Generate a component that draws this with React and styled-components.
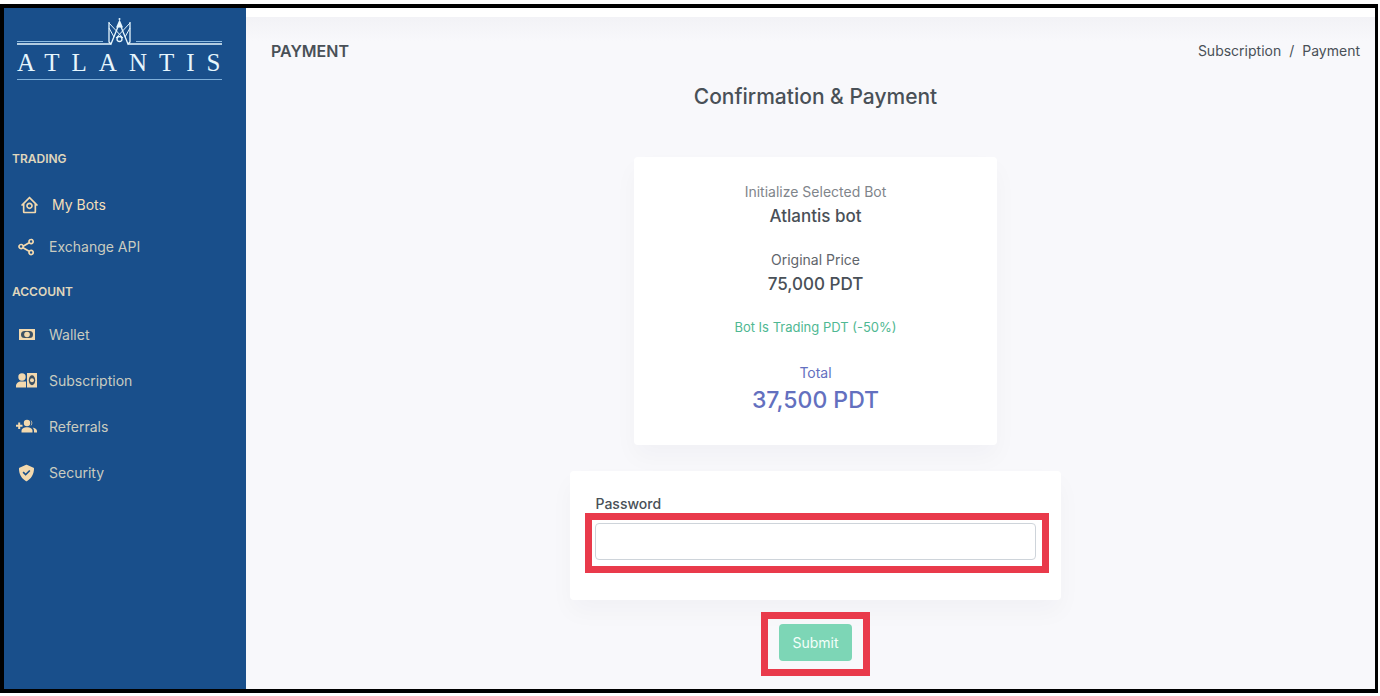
import React from "react";
import styled, { createGlobalStyle } from "styled-components";
import { BiHomeCircle, BiShareAlt, BiSolidCheckShield } from "react-icons/bi";

const GlobalStyle = createGlobalStyle`
  * {
    box-sizing: border-box;
  }

  body {
    margin: 0;
    background: #fff;
    color: #495057;
    font-family: Inter, "Open Sans", sans-serif;
    font-size: 14px;
    line-height: 20px;
  }
`;

const Page = styled.div`
  min-height: 100vh;
  padding: 4px 2px 3px 0;
  display: flex;
`;

const Frame = styled.div`
  flex: 1;
  display: flex;
  border: 4px solid #000;
  border-right-width: 3px;
  background: #f8f8fb;
`;

const Sidebar = styled.aside`
  flex: 0 0 242px;
  min-width: 0;
  background: #194f8b;
`;

const Logo = styled.a`
  display: block;
  margin: 10px 24px 0 13px;
  color: #e6f6fd;
  text-decoration: none;
  border-bottom: 1px solid #7fb0da;
`;

const LogoMark = styled.svg`
  display: block;
  width: 100%;
  height: 28px;
`;

const LogoText = styled.span`
  display: block;
  height: 33px;
  font-family: "Liberation Serif", serif;
  font-size: 25px;
  line-height: 33px;
  letter-spacing: 12px;
  white-space: nowrap;
`;

const Nav = styled.nav`
  margin-top: 69px;
`;

const NavTitle = styled.h2`
  margin: 0;
  padding-left: 8px;
  color: #e0d8bd;
  font-size: 12px;
  font-weight: 600;
  line-height: 20px;
`;

const NavList = styled.ul`
  margin: 0;
  padding: ${({ $compact }) => ($compact ? "15px 0 14px" : "10px 0 0")};
  list-style: none;
`;

const NavLink = styled.a`
  display: flex;
  align-items: center;
  gap: 11px;
  height: ${({ $compact }) => ($compact ? "42px" : "46px")};
  padding-left: ${({ $active }) => ($active ? "14px" : "11px")};
  color: ${({ $active }) => ($active ? "#f5dfb8" : "#c9ccc0")};
  text-decoration: none;

  svg {
    flex: none;
    width: 23px;
    height: 20px;
    color: #f3d9ae;
  }
`;

const Main = styled.main`
  flex: 1;
  padding: 0 15px 0 25px;
  border-top: 9px solid #fff;
  background: linear-gradient(#f2f2f6, #f8f8fb 24px);
`;

const Header = styled.header`
  display: flex;
  align-items: center;
  justify-content: space-between;
  padding-top: 24px;
`;

const PageTitle = styled.h1`
  margin: 0;
  font-size: 16px;
  font-weight: 600;
  line-height: 20px;
`;

const Breadcrumb = styled.ol`
  display: flex;
  gap: 8px;
  margin: 0;
  padding: 0;
  list-style: none;

  a {
    color: inherit;
    text-decoration: none;
  }
`;

const Heading = styled.h2`
  margin: 22px 0 0;
  font-size: 21px;
  font-weight: 500;
  line-height: 28px;
  text-align: center;
`;

const Card = styled.section`
  margin: 0 auto;
  border-radius: 4px;
  background: #fff;
  box-shadow: 0 12px 24px rgba(18, 38, 63, 0.03);
`;

const Summary = styled(Card)`
  width: calc(100% / 3);
  margin-top: 46px;
  padding: 24px 20px 28px;
  text-align: center;
`;

const Item = styled.div`
  margin-bottom: 19px;
  color: ${({ $color }) => $color};
`;

const Label = styled.p`
  margin: 0;
  line-height: 21px;
`;

const Value = styled.p`
  margin: 0;
  color: #495057;
  font-size: 17px;
  font-weight: 500;
  line-height: 28px;
`;

const Discount = styled.p`
  margin: 0 0 24px;
  color: #4fb892;
  font-size: 13px;
  line-height: 21px;
`;

const Total = styled.div`
  color: #6370bf;
`;

const TotalValue = styled.p`
  margin: 0;
  font-size: 23px;
  font-weight: 500;
  line-height: 34px;
`;

const PasswordCard = styled(Card)`
  width: 45%;
  margin-top: 26px;
  padding: 23px 25px 40px;
`;

const FieldLabel = styled.label`
  display: block;
  margin-bottom: 9px;
  font-weight: 500;
`;

const Highlight = styled.div`
  position: relative;

  &::after {
    content: "";
    position: absolute;
    inset: ${({ $inset }) => $inset};
    border: 7px solid #e93a4b;
    pointer-events: none;
  }
`;

const Input = styled.input`
  display: block;
  width: 100%;
  height: 37px;
  padding: 8px 12px;
  border: 1px solid #ced4da;
  border-radius: 4px;
  background: #fff;
  font: inherit;
`;

const Actions = styled.div`
  display: flex;
  justify-content: center;
  padding: 24px 0 28px;
`;

const Button = styled.button`
  display: block;
  height: 37px;
  padding: 0 13px;
  border: 0;
  border-radius: 4px;
  background: #7dd6b6;
  color: #f3fffa;
  font: inherit;
`;

const CashIcon = () => (
  <svg viewBox="0 0 23 20" fill="none" aria-hidden="true">
    <path fill="currentColor" d="M4 4h16v11H4z" />
    <rect x="6" y="6" width="12" height="7" rx="3.5" fill="#3d5163" />
    <circle cx="12" cy="9.5" r="2.8" fill="currentColor" />
  </svg>
);

const SubscriptionIcon = () => (
  <svg viewBox="0 0 23 20" fill="none" aria-hidden="true">
    <circle cx="7" cy="6" r="3.7" fill="currentColor" />
    <path fill="currentColor" d="M1 16.500v-1.500C1 12.300 3.300 10.500 6 10.500h5v6zM12 2h10v14.500H12z" />
    <ellipse cx="17" cy="9.200" rx="3.200" ry="5" fill="#3d5163" />
    <circle cx="17" cy="9.200" r="2" fill="currentColor" />
  </svg>
);

const ReferralsIcon = () => (
  <svg viewBox="0 0 23 20" fill="currentColor" aria-hidden="true">
    <path d="M3.200 5.500h2v2.300h2.300v2H5.200v2.300h-2V9.800H1v-2h2.200z" />
    <circle cx="12" cy="6" r="3.200" />
    <path d="M15.500 3.100a3.200 3.200 0 0 1 0 5.800 4.800 4.800 0 0 0 0-5.800z" />
    <path d="M6.500 15.500v-1.500c0-2.400 2.500-3.700 5.500-3.700s5.500 1.300 5.500 3.700v1.500z" />
    <path d="M17.500 10.600c2.500.4 4.500 1.600 4.500 3.400v1.500h-3V14c0-1.400-.5-2.500-1.500-3.400z" />
  </svg>
);

const trading = [
  { label: "My Bots", Icon: BiHomeCircle, active: true },
  { label: "Exchange API", Icon: BiShareAlt },
];

const account = [
  { label: "Wallet", Icon: CashIcon },
  { label: "Subscription", Icon: SubscriptionIcon },
  { label: "Referrals", Icon: ReferralsIcon },
  { label: "Security", Icon: BiSolidCheckShield },
];

const Menu = ({ items, compact }) => (
  <NavList $compact={compact}>
    {items.map(({ label, Icon, active }) => (
      <li key={label}>
        <NavLink href="#" $active={active} $compact={compact}>
          <Icon />
          {label}
        </NavLink>
      </li>
    ))}
  </NavList>
);

export default () => {
  return (
    <Page>
      <GlobalStyle />
      <Frame>
        <Sidebar>
          <Logo href="#">
            <LogoMark viewBox="0 0 205 28" fill="none" stroke="currentColor" aria-hidden="true">
              <path stroke="#8dbce2" d="M0 23.500h86M119 23.500h86" />
              <path strokeWidth="1.600" d="M0 26h94M205 26h-94" />
              <path strokeWidth="1.300" d="M92 4v20l2 2 8.500-21 8.500 21 2-2V4" />
              <path d="M92 5l14 15M113 5L99 20" />
              <path d="M92 10l5 9M113 10l-5 9" />
              <circle cx="102.500" cy="21" r="2.500" strokeWidth="1.300" />
              <path fill="currentColor" stroke="none" d="M102.500 1.500l3.500 8h-7z" />
              <circle cx="102.500" cy="1" r="1" fill="currentColor" stroke="none" />
            </LogoMark>
            <LogoText>ATLANTIS</LogoText>
          </Logo>
          <Nav>
            <NavTitle>TRADING</NavTitle>
            <Menu items={trading} compact />
            <NavTitle>ACCOUNT</NavTitle>
            <Menu items={account} />
          </Nav>
        </Sidebar>
        <Main>
          <Header>
            <PageTitle>PAYMENT</PageTitle>
            <Breadcrumb>
              <li>
                <a href="#">Subscription</a>
              </li>
              <li aria-hidden="true">/</li>
              <li>Payment</li>
            </Breadcrumb>
          </Header>
          <Heading>Confirmation &amp; Payment</Heading>
          <Summary>
            <Item $color="#7f858b">
              <Label>Initialize Selected Bot</Label>
              <Value>Atlantis bot</Value>
            </Item>
            <Item $color="#5f656b">
              <Label>Original Price</Label>
              <Value>75,000 PDT</Value>
            </Item>
            <Discount>Bot Is Trading PDT (-50%)</Discount>
            <Total>
              <Label>Total</Label>
              <TotalValue>37,500 PDT</TotalValue>
            </Total>
          </Summary>
          <form onSubmit={(e) => e.preventDefault()}>
            <PasswordCard>
              <FieldLabel htmlFor="password">Password</FieldLabel>
              <Highlight $inset="-10px -13px -13px -10px">
                <Input id="password" type="password" />
              </Highlight>
            </PasswordCard>
            <Actions>
              <Highlight $inset="-12px -18px -15px">
                <Button type="submit">Submit</Button>
              </Highlight>
            </Actions>
          </form>
        </Main>
      </Frame>
    </Page>
  );
};
